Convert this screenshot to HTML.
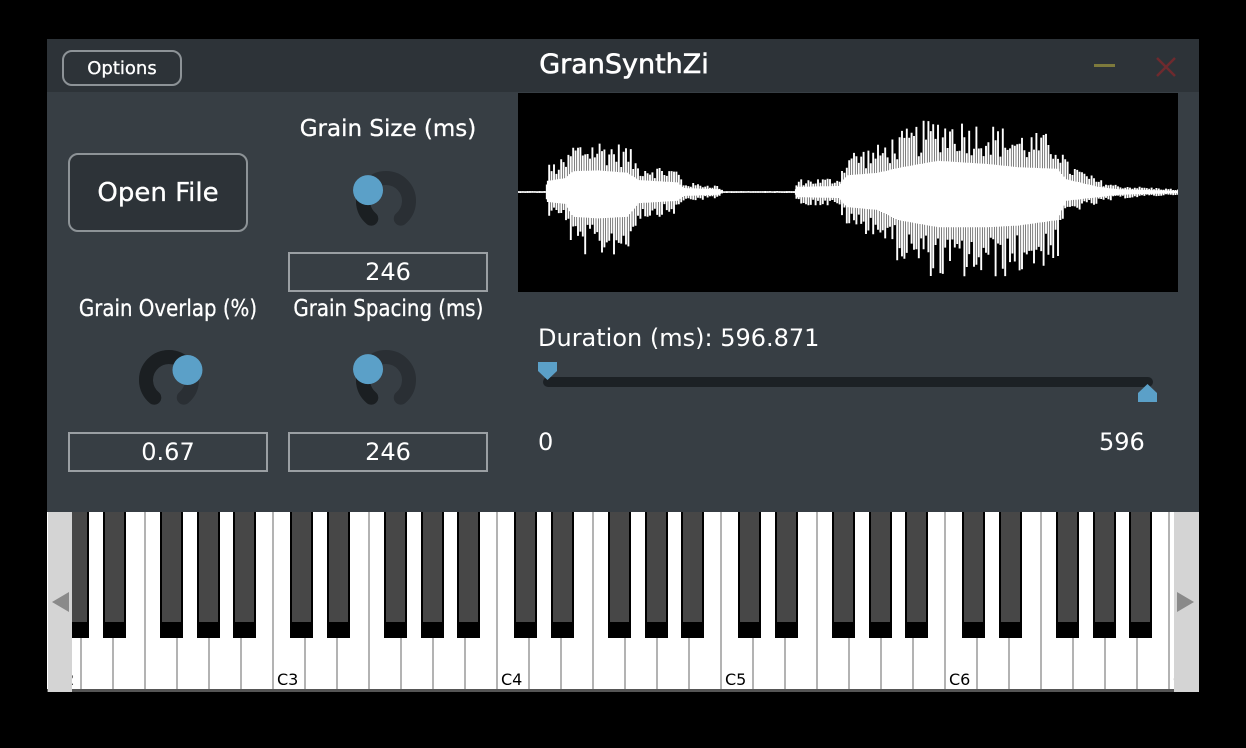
<!DOCTYPE html>
<html><head><meta charset="utf-8">
<style>
*{margin:0;padding:0;box-sizing:border-box}
body{width:1246px;height:748px;background:#000;position:relative;overflow:hidden;font-family:"DejaVu Sans","Liberation Sans",sans-serif;color:#fff}
.win{position:absolute;left:47px;top:39px;width:1152px;height:653px;background:#373e44}
.title{position:absolute;left:47px;top:39px;width:1152px;height:53px;background:#2d3338}
.abs{position:absolute}
.btn{position:absolute;border:2px solid #8d9397;border-radius:10px;background:#2d3338;display:flex;align-items:center;justify-content:center}
.box{position:absolute;border:2px solid #9a9fa3;display:flex;align-items:center;justify-content:center;font-size:24px}
.lbl{position:absolute;font-size:22px;text-align:center;white-space:nowrap}
</style></head><body>
<div class="win"></div>
<div class="title"></div>
<div class="btn" style="left:62px;top:50px;width:120px;height:36px;font-size:18px;-webkit-text-stroke:0.3px #fff">Options</div>
<div class="abs" style="left:0;width:1246px;top:49px;text-align:center;font-size:27px;-webkit-text-stroke:0.6px #fff;padding-left:2px">GranSynthZi</div>
<div class="abs" style="left:1094px;top:64px;width:21px;height:3px;background:#7d7a3c"></div>
<svg class="abs" style="left:1154px;top:56px" width="24" height="22"><path d="M3 2 L21 20 M21 2 L3 20" stroke="#6e2a2e" stroke-width="2.5"/></svg>

<div class="btn" style="left:68px;top:153px;width:180px;height:79px;font-size:26px;-webkit-text-stroke:0.3px #fff">Open File</div>
<div class="lbl" style="left:288px;width:200px;top:116px;font-size:23px;-webkit-text-stroke:0.3px #fff">Grain Size (ms)</div>
<div class="lbl" style="left:58px;width:220px;top:296px;font-size:23px;transform:scaleX(0.86);-webkit-text-stroke:0.3px #fff">Grain Overlap (%)</div>
<div class="lbl" style="left:278px;width:220px;top:296px;font-size:23px;transform:scaleX(0.86);-webkit-text-stroke:0.3px #fff">Grain Spacing (ms)</div>
<div class="box" style="left:288px;top:252px;width:200px;height:40px">246</div>
<div class="box" style="left:68px;top:432px;width:200px;height:40px">0.67</div>
<div class="box" style="left:288px;top:432px;width:200px;height:40px">246</div>
<svg id="knobs" class="abs" style="left:0;top:0" width="520" height="500"></svg>

<svg id="wave" class="abs" style="left:518px;top:93px;background:#000" width="660" height="199"></svg>

<div class="abs" style="left:538px;top:324px;font-size:24px">Duration (ms): 596.871</div>
<div class="abs" style="left:543px;top:377px;width:610px;height:10px;background:#1c2125;border-radius:5px"></div>
<svg class="abs" style="left:537px;top:361px" width="22" height="22"><path d="M1 1 H20 V10 L10.5 19 L1 10Z" fill="#5ba0c8"/></svg>
<svg class="abs" style="left:1137px;top:381px" width="22" height="22"><path d="M1 21 H20 V12 L10.5 3 L1 12Z" fill="#5ba0c8"/></svg>
<div class="abs" style="left:538px;top:428px;font-size:24px">0</div>
<div class="abs" style="left:1099px;top:428px;font-size:24px">596</div>

<svg id="kb" class="abs" style="left:47px;top:512px" width="1152" height="180"></svg>

<script>
var NS="http://www.w3.org/2000/svg";
function el(p,t,a){var e=document.createElementNS(NS,t);for(var k in a)e.setAttribute(k,a[k]);p.appendChild(e);return e;}
var K=document.getElementById('knobs');
function arcPath(cx,cy,r,a0,a1){
 function pt(a){var t=a*Math.PI/180;return [cx+r*Math.sin(t),cy-r*Math.cos(t)];}
 var p0=pt(a0),p1=pt(a1),large=(a1-a0)>180?1:0;
 return "M"+p0[0]+" "+p0[1]+" A"+r+" "+r+" 0 "+large+" 1 "+p1[0]+" "+p1[1];}
function knob(cx,cy,v){
 var r=23,a0=-140,a1=140,av=a0+(a1-a0)*v;
 el(K,'path',{d:arcPath(cx,cy,r,a0,a1),stroke:'#2a2f34','stroke-width':14,fill:'none','stroke-linecap':'round'});
 el(K,'path',{d:arcPath(cx,cy,r,a0,av),stroke:'#1b1f22','stroke-width':14,fill:'none','stroke-linecap':'round'});
 var t=av*Math.PI/180;
 el(K,'circle',{cx:cx+21*Math.sin(t),cy:cy-21*Math.cos(t),r:15,fill:'#5ba0c8'});
}
knob(386,201,0.29);knob(169,380,0.72);knob(386,380,0.29);
var W=document.getElementById('wave');
var env=[[0,1,1],[28,1,1],[30,28,25],[48,35,30],[55,52,62],[80,54,66],[110,48,62],[120,30,28],[160,24,22],[165,10,10],[200,7,7],[205,1,1],[276,1,1],[280,13,13],[320,15,15],[330,42,38],[360,48,45],[380,60,70],[420,78,88],[470,70,88],[500,62,84],[540,58,70],[548,32,22],[580,13,13],[600,7,7],[660,3,3]];
function E(x){for(var i=0;i<env.length-1;i++){if(x>=env[i][0]&&x<=env[i+1][0]){var f=(x-env[i][0])/(env[i+1][0]-env[i][0]);return [env[i][1]+f*(env[i+1][1]-env[i][1]),env[i][2]+f*(env[i+1][2]-env[i][2])];}}return [1,1];}
var s=12345;function rnd(){s=(s*1103515245+12345)%2147483648;return s/2147483648;}
var d="";
el(W,'line',{x1:0,y1:99,x2:660,y2:99,stroke:'#fff','stroke-width':1.5});
for(var x=0;x<660;x+=2.4){var e=E(x);var k=0.5+0.5*rnd();var k2=0.5+0.5*rnd();
 d+="M"+x.toFixed(1)+" "+(99-e[0]*k).toFixed(1)+"V"+(99+e[1]*k2).toFixed(1);}
el(W,'path',{d:d,stroke:'#fff','stroke-width':1.9,fill:'none'});
var c="";for(var x=0;x<660;x+=2){var e=E(x);c+="M"+x+" "+(99-e[0]*0.4).toFixed(1)+"V"+(99+e[1]*0.4).toFixed(1);}
el(W,'path',{d:c,stroke:'#fff','stroke-width':2.2,fill:'none'});
var B=document.getElementById('kb');
el(B,'rect',{x:0,y:0,width:1152,height:180,fill:'#fff'});
for(var i=0;i<40;i++){var x=2+i*32;
 el(B,'rect',{x:x-0.75,y:0,width:1.5,height:180,fill:'#9a9a9a'});
 if(i%7==0){var oct=2+i/7;var t=el(B,'text',{x:x+4,y:173,'font-size':16,'font-family':'DejaVu Sans, Liberation Sans, sans-serif',fill:'#000'});t.textContent='C'+oct;}
}
var bo=[17,54,111,148,184];
for(var o=0;o<6;o++){for(var j=0;j<5;j++){var x=2+o*224+bo[j];
 el(B,'rect',{x:x,y:0,width:23,height:126,fill:'#000'});
 el(B,'rect',{x:x+2,y:0,width:19,height:110,fill:'#474747'});}}
el(B,'rect',{x:0,y:177,width:1152,height:3,fill:'#555'});
el(B,'rect',{x:1,y:0,width:24,height:180,fill:'#d4d4d4'});
el(B,'path',{d:'M5 90 L22 80 L22 100Z',fill:'#8a8a8a'});
el(B,'rect',{x:1127,y:0,width:25,height:180,fill:'#d4d4d4'});
el(B,'path',{d:'M1147 90 L1130 80 L1130 100Z',fill:'#8a8a8a'});
</script>
</body></html>
